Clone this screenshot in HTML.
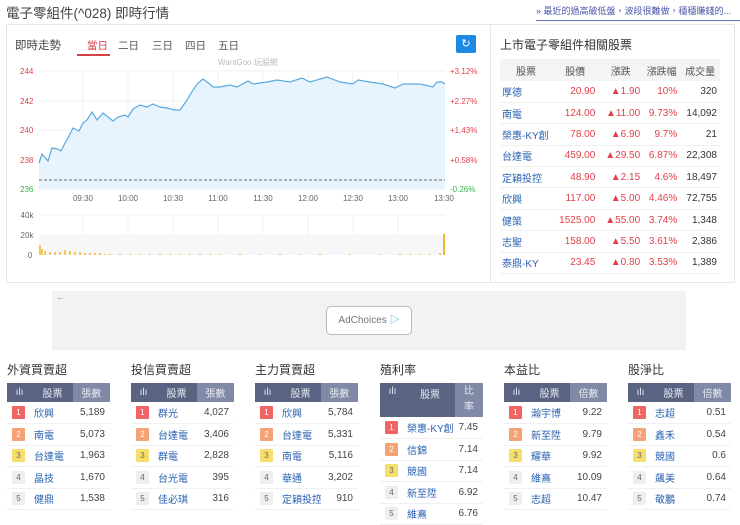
<!DOCTYPE html>
<html><head><meta charset="utf-8"><style>
*{margin:0;padding:0;box-sizing:border-box}
body{width:740px;height:515px;overflow:hidden;background:#fff;font-family:"Liberation Sans","Noto Sans CJK TC",sans-serif;color:#333;position:relative}
.a{position:absolute;white-space:nowrap}
.t{font-size:10.5px}
.red{color:#e0404a}
table{border-collapse:collapse}
.rt td{height:21.4px;font-size:10px;border-bottom:1px solid #f0f0f0;text-align:right;padding-right:3px;white-space:nowrap}
.rt td:first-child{text-align:left;color:#2a62b0;padding-left:2px}
.rt th{height:22px;font-weight:normal;color:#555;font-size:10px;background:#f3f4f6}
.bt{position:absolute;top:383px;width:103px;font-size:10px;table-layout:fixed}
.bt th{background:#5a6382;color:#e8eaf2;font-weight:normal;height:19px}
.bt th.l{background:#808aa7}
.bt td{height:21.5px;border-bottom:1px solid #f0f0f0;white-space:nowrap;overflow:hidden}
.bt td.r{text-align:right;padding-right:5px;color:#444}
.bt td.n{color:#2a62b0;padding-left:2px}
.bd{display:inline-block;width:13px;height:13px;line-height:13px;text-align:center;font-size:8px;margin-left:5px;color:#fff;border-radius:1px}
.b1{background:#f06464}.b2{background:#f5a376}.b3{background:#f7df6e;color:#666}.b4{background:#eee;color:#666}
.h{position:absolute;top:361px;font-size:12px;color:#333}
</style></head><body>
<div class="a" style="left:6px;top:2px;font-size:13.5px;color:#444">電子零組件(^028) 即時行情</div>
<div class="a" style="left:536px;top:4px;width:204px;overflow:hidden;font-size:9px;color:#4a55a8;border-bottom:1px solid #6a75c0;padding-bottom:3px">» 最近的過高破低盤，波段很難做，穩穩賺錢的...</div>
<div class="a" style="left:6px;top:24px;width:729px;height:259px;border:1px solid #e6e6e6"></div>
<div class="a" style="left:490px;top:25px;width:1px;height:257px;background:#e6e6e6"></div>
<div class="a" style="left:15px;top:37px;font-size:11.5px;color:#444">即時走勢</div>
<div class="a t" style="left:87px;top:38px;color:#e0404a">當日</div>
<div class="a" style="left:77px;top:54px;width:33px;height:2px;background:#d54040"></div>
<div class="a t" style="left:118px;top:38px;color:#555">二日</div>
<div class="a t" style="left:152px;top:38px;color:#555">三日</div>
<div class="a t" style="left:185px;top:38px;color:#555">四日</div>
<div class="a t" style="left:218px;top:38px;color:#555">五日</div>
<div class="a" style="left:456px;top:35px;width:20px;height:18px;background:#1e88e5;border-radius:2px;color:#fff;font-size:11px;text-align:center;line-height:18px">↻</div>
<div class="a" style="left:218px;top:57px;font-size:8px;color:#bbb">WantGoo 玩股網</div>
<svg class="a" style="left:0;top:60px" width="490" height="205" viewBox="0 60 490 205">
<g stroke="#edf0f4" stroke-width="1">
<line x1="39" y1="71" x2="445" y2="71"/><line x1="39" y1="101" x2="445" y2="101"/><line x1="39" y1="130" x2="445" y2="130"/><line x1="39" y1="160" x2="445" y2="160"/><line x1="39" y1="189" x2="445" y2="189"/>
<line x1="83" y1="71" x2="83" y2="189"/><line x1="128" y1="71" x2="128" y2="189"/><line x1="173" y1="71" x2="173" y2="189"/><line x1="218" y1="71" x2="218" y2="189"/><line x1="263" y1="71" x2="263" y2="189"/><line x1="308" y1="71" x2="308" y2="189"/><line x1="353" y1="71" x2="353" y2="189"/><line x1="398" y1="71" x2="398" y2="189"/>
<line x1="39" y1="215" x2="445" y2="215"/><line x1="39" y1="235" x2="445" y2="235"/>
<line x1="83" y1="215" x2="83" y2="255"/><line x1="128" y1="215" x2="128" y2="255"/><line x1="173" y1="215" x2="173" y2="255"/><line x1="218" y1="215" x2="218" y2="255"/><line x1="263" y1="215" x2="263" y2="255"/><line x1="308" y1="215" x2="308" y2="255"/><line x1="353" y1="215" x2="353" y2="255"/><line x1="398" y1="215" x2="398" y2="255"/>
</g>
<rect x="39" y="235" width="406" height="20" fill="#f7f7f7"/>
<path d="M39,163 L42,154 48,161 52,148 57,149 61,151 65,143 68,138 73,128 79,131 83,123 87,120 92,112 97,120 103,113 113,121 118,117 125,115 128,117 133,109 140,105 147,107 153,104 160,107 167,108 175,110 180,110 187,100 193,90 198,83 203,79 207,82 213,87 220,87 230,85 237,87 248,81 253,84 267,82 277,80 290,82 302,78 310,82 327,77 340,82 353,84 358,80 370,82 383,84 395,88 403,84 420,84 433,87 437,82 442,82 445,84 L445,189 L39,189Z" fill="#e8f4fd"/>
<path d="M39,163 L42,154 48,161 52,148 57,149 61,151 65,143 68,138 73,128 79,131 83,123 87,120 92,112 97,120 103,113 113,121 118,117 125,115 128,117 133,109 140,105 147,107 153,104 160,107 167,108 175,110 180,110 187,100 193,90 198,83 203,79 207,82 213,87 220,87 230,85 237,87 248,81 253,84 267,82 277,80 290,82 302,78 310,82 327,77 340,82 353,84 358,80 370,82 383,84 395,88 403,84 420,84 433,87 437,82 442,82 445,84" fill="none" stroke="#5aaae0" stroke-width="1.2"/>
<line x1="39" y1="180" x2="445" y2="180" stroke="#666" stroke-dasharray="3,2" stroke-width="1"/>
<path d="M40,255V245M42,255V249M45,255V251M50,255V252M55,255V252M60,255V252M65,255V250M70,255V251M75,255V252M80,255V252M85,255V253M90,255V253M95,255V253M100,255V253M105,255V254M110,255V254M120,255V254M130,255V254M140,255V254M150,255V254M160,255V254M170,255V254M180,255V254M190,255V254M200,255V254M210,255V254M220,255V254M240,255V254M260,255V254M280,255V254M300,255V254M320,255V254M350,255V254M380,255V254M400,255V254M410,255V254M420,255V254M430,255V254M440,255V253" stroke="#f2b630" stroke-width="1.5"/>
<rect x="443" y="234" width="2" height="21" fill="#f2b630"/>
<g font-size="8" fill="#e0404a" font-family="Liberation Sans,sans-serif">
<text x="20" y="74">244</text><text x="20" y="104">242</text><text x="20" y="133">240</text><text x="20" y="163">238</text>
<text x="450" y="74">+3.12%</text><text x="450" y="104">+2.27%</text><text x="450" y="133">+1.43%</text><text x="450" y="163">+0.58%</text>
</g>
<text x="20" y="192" font-size="8" fill="#3bb34a">236</text><text x="450" y="192" font-size="8" fill="#3bb34a">-0.26%</text>
<g font-size="8" fill="#666" text-anchor="middle">
<text x="83" y="201">09:30</text><text x="128" y="201">10:00</text><text x="173" y="201">10:30</text><text x="218" y="201">11:00</text><text x="263" y="201">11:30</text><text x="308" y="201">12:00</text><text x="353" y="201">12:30</text><text x="398" y="201">13:00</text><text x="444" y="201">13:30</text>
<text x="27" y="218">40k</text><text x="27" y="238">20k</text><text x="30" y="258">0</text>
</g>
</svg>
<div class="a" style="left:500px;top:36px;font-size:12px;color:#333">上市電子零組件相關股票</div>
<table class="rt a" style="left:500px;top:59px;width:220px">
<tr><th style="width:52px">股票</th><th>股價</th><th>漲跌</th><th>漲跌幅</th><th>成交量</th></tr>
<tr><td>厚德</td><td class="red">20.90</td><td class="red">▲1.90</td><td class="red">10%</td><td>320</td></tr>
<tr><td>南電</td><td class="red">124.00</td><td class="red">▲11.00</td><td class="red">9.73%</td><td>14,092</td></tr>
<tr><td>榮惠-KY創</td><td class="red">78.00</td><td class="red">▲6.90</td><td class="red">9.7%</td><td>21</td></tr>
<tr><td>台達電</td><td class="red">459.00</td><td class="red">▲29.50</td><td class="red">6.87%</td><td>22,308</td></tr>
<tr><td>定穎投控</td><td class="red">48.90</td><td class="red">▲2.15</td><td class="red">4.6%</td><td>18,497</td></tr>
<tr><td>欣興</td><td class="red">117.00</td><td class="red">▲5.00</td><td class="red">4.46%</td><td>72,755</td></tr>
<tr><td>健策</td><td class="red">1525.00</td><td class="red">▲55.00</td><td class="red">3.74%</td><td>1,348</td></tr>
<tr><td>志聖</td><td class="red">158.00</td><td class="red">▲5.50</td><td class="red">3.61%</td><td>2,386</td></tr>
<tr><td>泰鼎-KY</td><td class="red">23.45</td><td class="red">▲0.80</td><td class="red">3.53%</td><td>1,389</td></tr>
</table>
<div class="a" style="left:52px;top:291px;width:634px;height:59px;background:#f2f2f2"></div>
<div class="a" style="left:56px;top:292px;font-size:9px;color:#888">←</div>
<div class="a" style="left:326px;top:306px;width:86px;height:29px;background:#fff;border:1px solid #bbb;border-radius:5px;font-size:10px;color:#777;text-align:center;line-height:27px">AdChoices <span style="color:#2bb5dc">▷</span></div>

<div class="h" style="left:7px">外資買賣超</div>
<table class="bt" style="left:7px"><tr><th style="width:25px">ılı</th><th>股票</th><th class="l" style="width:37px">張數</th></tr>
<tr><td><span class="bd b1">1</span></td><td class="n">欣興</td><td class="r">5,189</td></tr>
<tr><td><span class="bd b2">2</span></td><td class="n">南電</td><td class="r">5,073</td></tr>
<tr><td><span class="bd b3">3</span></td><td class="n">台達電</td><td class="r">1,963</td></tr>
<tr><td><span class="bd b4">4</span></td><td class="n">晶技</td><td class="r">1,670</td></tr>
<tr><td><span class="bd b4">5</span></td><td class="n">健鼎</td><td class="r">1,538</td></tr></table>

<div class="h" style="left:131px">投信買賣超</div>
<table class="bt" style="left:131px"><tr><th style="width:25px">ılı</th><th>股票</th><th class="l" style="width:37px">張數</th></tr>
<tr><td><span class="bd b1">1</span></td><td class="n">群光</td><td class="r">4,027</td></tr>
<tr><td><span class="bd b2">2</span></td><td class="n">台達電</td><td class="r">3,406</td></tr>
<tr><td><span class="bd b3">3</span></td><td class="n">群電</td><td class="r">2,828</td></tr>
<tr><td><span class="bd b4">4</span></td><td class="n">台光電</td><td class="r">395</td></tr>
<tr><td><span class="bd b4">5</span></td><td class="n">佳必琪</td><td class="r">316</td></tr></table>

<div class="h" style="left:255px">主力買賣超</div>
<table class="bt" style="left:255px"><tr><th style="width:25px">ılı</th><th>股票</th><th class="l" style="width:37px">張數</th></tr>
<tr><td><span class="bd b1">1</span></td><td class="n">欣興</td><td class="r">5,784</td></tr>
<tr><td><span class="bd b2">2</span></td><td class="n">台達電</td><td class="r">5,331</td></tr>
<tr><td><span class="bd b3">3</span></td><td class="n">南電</td><td class="r">5,116</td></tr>
<tr><td><span class="bd b4">4</span></td><td class="n">華通</td><td class="r">3,202</td></tr>
<tr><td><span class="bd b4">5</span></td><td class="n">定穎投控</td><td class="r">910</td></tr></table>

<div class="h" style="left:380px">殖利率</div>
<table class="bt" style="left:380px"><tr><th style="width:25px;height:34px;vertical-align:top;padding-top:3px">ılı</th><th style="vertical-align:top;padding-top:3px">股票</th><th class="l" style="width:28px;line-height:16px">比<br>率</th></tr>
<tr><td><span class="bd b1">1</span></td><td class="n">榮惠-KY創</td><td class="r">7.45</td></tr>
<tr><td><span class="bd b2">2</span></td><td class="n">信錦</td><td class="r">7.14</td></tr>
<tr><td><span class="bd b3">3</span></td><td class="n">競國</td><td class="r">7.14</td></tr>
<tr><td><span class="bd b4">4</span></td><td class="n">新至陞</td><td class="r">6.92</td></tr>
<tr><td><span class="bd b4">5</span></td><td class="n">維熹</td><td class="r">6.76</td></tr></table>

<div class="h" style="left:504px">本益比</div>
<table class="bt" style="left:504px"><tr><th style="width:25px">ılı</th><th>股票</th><th class="l" style="width:37px">倍數</th></tr>
<tr><td><span class="bd b1">1</span></td><td class="n">瀚宇博</td><td class="r">9.22</td></tr>
<tr><td><span class="bd b2">2</span></td><td class="n">新至陞</td><td class="r">9.79</td></tr>
<tr><td><span class="bd b3">3</span></td><td class="n">耀華</td><td class="r">9.92</td></tr>
<tr><td><span class="bd b4">4</span></td><td class="n">維熹</td><td class="r">10.09</td></tr>
<tr><td><span class="bd b4">5</span></td><td class="n">志超</td><td class="r">10.47</td></tr></table>

<div class="h" style="left:628px">股淨比</div>
<table class="bt" style="left:628px"><tr><th style="width:25px">ılı</th><th>股票</th><th class="l" style="width:37px">倍數</th></tr>
<tr><td><span class="bd b1">1</span></td><td class="n">志超</td><td class="r">0.51</td></tr>
<tr><td><span class="bd b2">2</span></td><td class="n">鑫禾</td><td class="r">0.54</td></tr>
<tr><td><span class="bd b3">3</span></td><td class="n">競國</td><td class="r">0.6</td></tr>
<tr><td><span class="bd b4">4</span></td><td class="n">飆美</td><td class="r">0.64</td></tr>
<tr><td><span class="bd b4">5</span></td><td class="n">敬鵬</td><td class="r">0.74</td></tr></table>
</body></html>
